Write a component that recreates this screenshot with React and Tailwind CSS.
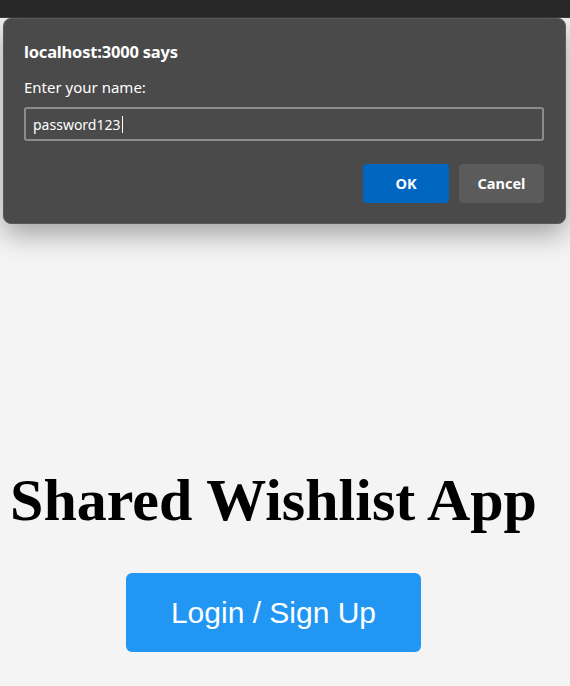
import React from "react";

const PromptDialog = ({ value }) => {
  return (
    <div className="absolute left-[3px] top-[18px] w-[563px] h-[206px] rounded-[8px] bg-[#4a4a4a] border border-[#5a5a5a] shadow-[0_10px_28px_rgba(0,0,0,0.35)] px-[20px] font-['Noto_Sans',sans-serif] text-white">
      <h2 className="mt-[22px] text-[16.5px] leading-[22px] font-bold tracking-[-0.2px]">
        localhost:3000 says
      </h2>
      <p className="mt-[14px] text-[15px] leading-[20px]">Enter your name:</p>
      {/* input with caret */}
      <div className="mt-[10px] h-[34px] w-[520px] rounded-[3px] border-2 border-[#8d8d8d] flex items-center px-[7px] text-[14px]">
        <span>{value}</span>
        <span className="w-px h-[17px] bg-white ml-px" />
      </div>
      <div className="mt-[23px] flex justify-end gap-[10px] pr-[1px]">
        <button className="w-[86px] h-[39px] rounded-[4px] bg-[#0067c0] text-[14.5px] font-bold">
          OK
        </button>
        <button className="w-[85px] h-[39px] rounded-[4px] bg-[#5b5b5b] text-[14.5px] font-bold">
          Cancel
        </button>
      </div>
    </div>
  );
};

const App = () => {
  return (
    <div className="relative w-[570px] h-[686px] overflow-hidden bg-[#f4f4f4]">
      {/* browser bar */}
      <div className="h-[18px] bg-[#292929] border-b border-[#3d3d3d]" />

      <div className="w-[547px] flex flex-col items-center pt-[448px]">
        <h1 className="font-['Liberation_Serif',serif] font-bold text-[60px] leading-[68px] text-black">
          Shared Wishlist App
        </h1>
        <button className="mt-[39px] w-[295px] h-[79px] rounded-[6px] bg-[#2196f3] text-white font-['Liberation_Sans',sans-serif] text-[30px]">
          Login / Sign Up
        </button>
      </div>

      <PromptDialog value="password123" />
    </div>
  );
};

export default App;
